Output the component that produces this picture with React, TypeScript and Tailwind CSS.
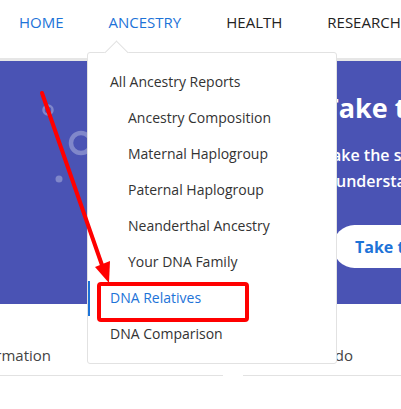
import React from "react";

const items: { label: string; indent: boolean; active?: boolean }[] = [
  { label: "All Ancestry Reports", indent: false },
  { label: "Ancestry Composition", indent: true },
  { label: "Maternal Haplogroup", indent: true },
  { label: "Paternal Haplogroup", indent: true },
  { label: "Neanderthal Ancestry", indent: true },
  { label: "Your DNA Family", indent: true },
  { label: "DNA Relatives", indent: false, active: true },
  { label: "DNA Comparison", indent: false },
];

export default function App() {
  return (
    <div
      className="relative w-[401px] h-[409px] overflow-hidden bg-white text-[#333]"
      style={{ fontFamily: '"Open Sans", "Noto Sans", sans-serif' }}
    >
      {/* Top nav */}
      <nav className="h-[58px] flex items-start pt-[11px] pl-[19px] gap-[45px] text-[15px] whitespace-nowrap">
        <span className="text-[#1d73d8]">HOME</span>
        <span className="text-[#1d73d8]">ANCESTRY</span>
        <span className="text-[#222]">HEALTH</span>
        <span className="text-[#222]">RESEARCH</span>
      </nav>
      <div className="h-[3px] bg-[#e6e6e6]" />

      {/* Banner */}
      <section className="relative h-[243px] bg-[#4a53b4] overflow-hidden">
        <svg className="absolute left-0 top-0" width="120" height="140">
          <circle cx="48" cy="49" r="4.5" fill="none" stroke="rgba(255,255,255,0.3)" strokeWidth="2.5" />
          <circle cx="81" cy="82" r="10" fill="none" stroke="rgba(255,255,255,0.3)" strokeWidth="4.5" />
          <circle cx="59" cy="118" r="3.5" fill="rgba(255,255,255,0.3)" />
        </svg>
        <div className="absolute left-[323px] top-[28px] text-white whitespace-nowrap">
          <div className="text-[27px] font-bold leading-[38px]">Take the next step</div>
          <div className="mt-[15px] text-[16px] font-semibold leading-[26px]">Take the survey</div>
          <div className="text-[16px] font-semibold leading-[26px] pl-[13px]">understand more</div>
          <div className="mt-[31px] ml-[10px] h-[43px] w-[200px] rounded-full bg-white flex items-center pl-[22px] text-[16px] font-bold text-[#1d73d8]">
            Take the survey
          </div>
        </div>
      </section>

      {/* Tabs row */}
      <div className="h-[72px] relative">
        <div className="absolute left-0 top-[40px] w-[51px] flex justify-end overflow-hidden whitespace-nowrap text-[15px] text-[#444]">
          <span>Information</span>
        </div>
        <div className="absolute left-[250px] top-[40px] w-[103px] flex justify-end overflow-hidden whitespace-nowrap text-[15px] text-[#444]">
          <span>What we do</span>
        </div>
        <div className="absolute left-0 right-0 top-[71px] flex">
          <div className="w-[223px] h-px bg-[#e2e2e2]" />
          <div className="w-[20px]" />
          <div className="flex-1 h-px bg-[#e2e2e2]" />
        </div>
      </div>
      <div className="pl-[245px] pt-[26px] text-[22px] font-semibold text-[#222] whitespace-nowrap leading-[30px]">
        How does the
      </div>

      {/* Dropdown */}
      <div className="absolute left-[87px] top-[52px] w-[250px] h-[312px] bg-white border border-[#e2e2e2] rounded-[3px]">
        <div className="absolute left-[20px] top-[-9px] w-[17px] h-[17px] rotate-45 bg-white border-l border-t border-[#e2e2e2]" />
        <div className="absolute left-0 top-[228px] w-[2px] h-[35px] bg-[#1d73d8]" />
        <div className="relative pt-[10px] text-[14px] whitespace-nowrap">
          {items.map((it) => (
            <div
              key={it.label}
              className={
                "h-[36px] flex items-center " +
                (it.indent ? "pl-[40px] " : "pl-[22px] ") +
                (it.active ? "text-[#1d73d8]" : "text-[#333]")
              }
            >
              {it.label}
            </div>
          ))}
        </div>
      </div>

      {/* Annotations */}
      <svg className="absolute left-0 top-0 pointer-events-none" width="401" height="409">
        <line x1="42" y1="93" x2="103" y2="268" stroke="#f00" strokeWidth="4" strokeLinecap="round" />
        <polygon points="109,283 110,261 95,267" fill="#f00" />
        <rect x="99" y="284" width="148" height="36" rx="2" fill="none" stroke="#f00" strokeWidth="4" />
      </svg>
    </div>
  );
}
